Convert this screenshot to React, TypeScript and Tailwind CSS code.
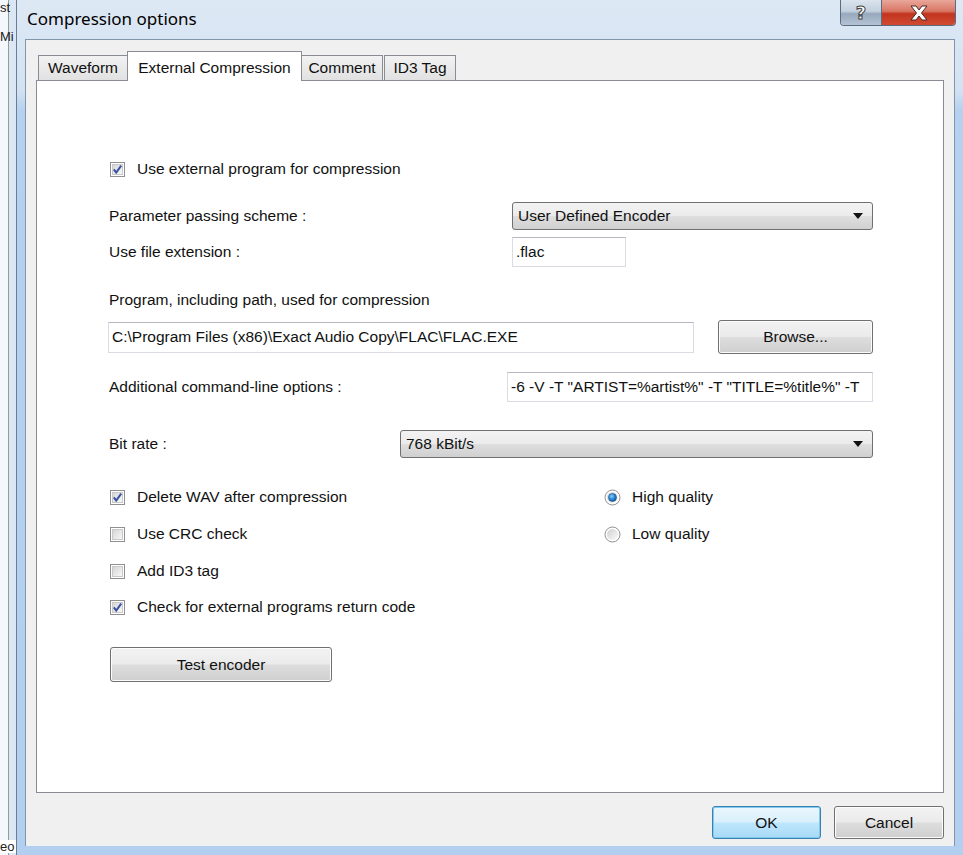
import React from "react";

const ui = "font-['Liberation_Sans',Arial,sans-serif] text-[15.5px] text-[#111]";

function CheckBox({ checked }: { checked: boolean }) {
  return (
    <svg width="15" height="15" viewBox="0 0 15 15" className="shrink-0">
      <defs>
        <linearGradient id="cbfill" x1="0" y1="0" x2="1" y2="1">
          <stop offset="0" stopColor="#d4d4d4" />
          <stop offset="1" stopColor="#fafafa" />
        </linearGradient>
      </defs>
      <rect x="0.5" y="0.5" width="14" height="14" fill="#fff" stroke="#8f8f8f" />
      <rect x="2.5" y="2.5" width="10" height="10" fill="url(#cbfill)" stroke="#c9c9c9" />
      {checked && (
        <path d="M3.8 7.4 L6.2 10.6 L11.2 3.6" stroke="#3a52a0" strokeWidth="2" fill="none" />
      )}
    </svg>
  );
}

function Radio({ checked }: { checked: boolean }) {
  return (
    <svg width="17" height="17" viewBox="0 0 17 17" className="shrink-0">
      <defs>
        <radialGradient id="rdot" cx="0.4" cy="0.35" r="0.7">
          <stop offset="0" stopColor="#8fd3fb" />
          <stop offset="0.5" stopColor="#2a8ad8" />
          <stop offset="1" stopColor="#17569c" />
        </radialGradient>
        <linearGradient id="rbg" x1="0" y1="0" x2="1" y2="1">
          <stop offset="0" stopColor="#cfcfcf" />
          <stop offset="1" stopColor="#fbfbfb" />
        </linearGradient>
      </defs>
      <circle cx="8.5" cy="8.5" r="7.5" fill="#fff" stroke="#8f8f8f" />
      <circle cx="8.5" cy="8.5" r="5.5" fill="url(#rbg)" />
      {checked && <circle cx="8.5" cy="8.5" r="4" fill="url(#rdot)" stroke="#1c4f8c" strokeWidth="0.6" />}
    </svg>
  );
}

function Arrow() {
  return (
    <svg width="10" height="6" viewBox="0 0 10 6" className="shrink-0">
      <path d="M0 0 L10 0 L5 6 Z" fill="#111" />
    </svg>
  );
}

function Select({ value, className }: { value: string; className: string }) {
  return (
    <div
      className={`${className} h-[28px] flex items-center justify-between pl-[5px] pr-[9px] rounded-[3px] border border-[#707070] bg-[linear-gradient(#f3f3f3_0%,#ebebeb_48%,#dedede_52%,#d0d0d0_100%)]`}
    >
      <span>{value}</span>
      <Arrow />
    </div>
  );
}

function Button({ label, className }: { label: string; className: string }) {
  return (
    <div
      className={`${className} flex items-center justify-center rounded-[3px] border border-[#707070] bg-[linear-gradient(#f2f2f2_0%,#ebebeb_48%,#dddddd_52%,#cfcfcf_100%)] shadow-[inset_0_0_0_1px_#fcfcfc]`}
    >
      {label}
    </div>
  );
}

function Text({ value, className }: { value: string; className: string }) {
  return (
    <div
      className={`${className} h-[30px] flex items-center pl-[3px] bg-white border border-[#dadce3] border-t-[#b5b8c0] overflow-hidden whitespace-nowrap`}
    >
      {value}
    </div>
  );
}

function CheckRow({ checked, label }: { checked: boolean; label: string }) {
  return (
    <div className="flex items-center gap-[12px] ml-px">
      <CheckBox checked={checked} />
      <span>{label}</span>
    </div>
  );
}

function RadioRow({ checked, label }: { checked: boolean; label: string }) {
  return (
    <div className="flex items-center gap-[11px]">
      <Radio checked={checked} />
      <span>{label}</span>
    </div>
  );
}

export default function App() {
  return (
    <div className={`${ui} w-[963px] h-[855px] flex overflow-hidden bg-[#b7d1ee]`}>
      {/* desktop app behind the dialog */}
      <div className="w-[16px] h-full flex flex-col bg-[linear-gradient(90deg,#f4f7fb_0%,#f4f7fb_50%,#9a9a9a_50%,#9a9a9a_56%,#dbe7f4_56%)] text-[13px] leading-none">
        <span className="text-[#222] pt-px">st</span>
        <span className="text-[#222] mt-[16px]">Mi</span>
        <span className="mt-auto mb-[2px] text-[#222] bg-white">eo</span>
      </div>

      {/* dialog window */}
      <div className="flex-1 h-full flex flex-col border-l border-[#6b7d93] bg-[linear-gradient(180deg,#dde8f4_0px,#d3e2f2_90px,#b6d1ef_110px,#b3cff0_100%)]">
        <div className="h-[39px] flex items-start">
          <span className="pl-[10px] pt-[6px] font-['Noto_Sans',sans-serif] text-[17px] text-black">
            Compression options
          </span>
          <div className="ml-auto mr-[7px] flex h-[26px] rounded-b-[4px] border border-t-0 border-[#5b6b80] overflow-hidden">
            <div className="w-[41px] flex items-center justify-center bg-[linear-gradient(#dbe4ee_0%,#c3d0de_45%,#98a9bd_55%,#b4c3d4_100%)] border-r border-[#5b6b80]">
              <span className="font-['DejaVu_Sans',sans-serif] font-bold text-[18px] text-white [-webkit-text-stroke:1px_#444] leading-none">?</span>
            </div>
            <div className="w-[73px] flex items-center justify-center bg-[linear-gradient(#e9a89a_0%,#d87563_45%,#c2351f_55%,#d04a30_100%)]">
              <svg width="20" height="16" viewBox="0 0 20 16">
                <path
                  d="M2 1 L7 1 L10 5 L13 1 L18 1 L12.5 8 L18 15 L13 15 L10 11 L7 15 L2 15 L7.5 8 Z"
                  fill="#fff"
                  stroke="#4a2a26"
                  strokeWidth="1"
                  strokeLinejoin="round"
                />
              </svg>
            </div>
          </div>
        </div>

        {/* client area */}
        <div className="ml-[8px] mr-[8px] h-[807px] flex flex-col bg-[#f0f0f0] border border-[#8196ad] border-b-0 px-[10px]">
          <div className="flex items-end h-[29px] mt-[11px] pl-[2px]">
            <div className="w-[90px] h-[25px] flex items-center justify-center border border-b-0 border-[#898c95] bg-[linear-gradient(#f2f2f2,#e1e1e1)]">
              Waveform
            </div>
            <div className="relative z-10 -mb-px -ml-px w-[175px] h-[30px] flex items-start pt-[4px] justify-center border border-b-0 border-[#898c95] bg-white">
              External Compression
            </div>
            <div className="-ml-px w-[82px] h-[25px] flex items-center justify-center border border-b-0 border-[#898c95] bg-[linear-gradient(#f2f2f2,#e1e1e1)]">
              Comment
            </div>
            <div className="ml-px w-[72px] h-[25px] flex items-center justify-center border border-b-0 border-[#898c95] bg-[linear-gradient(#f2f2f2,#e1e1e1)]">
              ID3 Tag
            </div>
          </div>

          <div className="h-[713px] border border-[#898c95] bg-white flex flex-col pl-[72px] pr-[70px]">
            <div className="mt-[78px] h-[20px] flex items-center">
              <CheckRow checked label="Use external program for compression" />
            </div>

            <div className="mt-[23px] h-[28px] flex items-center">
              <span className="w-[403px]">Parameter passing scheme :</span>
              <Select value="User Defined Encoder" className="flex-1" />
            </div>

            <div className="mt-[7px] h-[30px] flex items-center">
              <span className="w-[403px]">Use file extension :</span>
              <Text value=".flac" className="w-[114px]" />
            </div>

            <div className="mt-[23px] h-[20px] flex items-center">
              <span>Program, including path, used for compression</span>
            </div>

            <div className="mt-[10px] h-[34px] flex items-center">
              <Text value="C:\Program Files (x86)\Exact Audio Copy\FLAC\FLAC.EXE" className="-ml-px w-[586px] h-[31px]" />
              <Button label="Browse..." className="ml-auto w-[155px] h-[34px]" />
            </div>

            <div className="mt-[18px] h-[30px] flex items-center">
              <span className="flex-1">Additional command-line options :</span>
              <Text
                value={'-6 -V -T "ARTIST=%artist%" -T "TITLE=%title%" -T'}
                className="w-[366px]"
              />
            </div>

            <div className="mt-[28px] h-[28px] flex items-center">
              <span className="w-[291px]">Bit rate :</span>
              <Select value="768 kBit/s" className="flex-1" />
            </div>

            <div className="mt-[29px] h-[20px] flex items-center">
              <div className="w-[495px]">
                <CheckRow checked label="Delete WAV after compression" />
              </div>
              <RadioRow checked label="High quality" />
            </div>
            <div className="mt-[17px] h-[20px] flex items-center">
              <div className="w-[495px]">
                <CheckRow checked={false} label="Use CRC check" />
              </div>
              <RadioRow checked={false} label="Low quality" />
            </div>
            <div className="mt-[17px] h-[20px] flex items-center">
              <CheckRow checked={false} label="Add ID3 tag" />
            </div>
            <div className="mt-[16px] h-[20px] flex items-center">
              <CheckRow checked label="Check for external programs return code" />
            </div>

            <div className="mt-[30px] flex">
              <Button label="Test encoder" className="ml-px w-[222px] h-[35px]" />
            </div>
          </div>

          <div className="mt-[13px] flex justify-end gap-[13px]">
            <div className="w-[109px] h-[33px] flex items-center justify-center rounded-[3px] border border-[#3c7fb1] bg-[linear-gradient(#eaf6fd_0%,#d9f0fc_48%,#bee6fd_52%,#a7d9f5_100%)] shadow-[inset_0_0_0_1px_#7ecbf0]">
              OK
            </div>
            <Button label="Cancel" className="w-[110px] h-[33px]" />
          </div>
        </div>
      </div>
    </div>
  );
}
